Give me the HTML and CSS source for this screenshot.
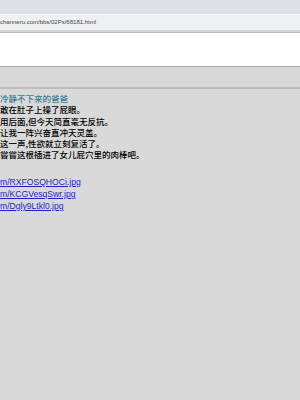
FILE: index.html
```html
<!DOCTYPE html>
<html lang="zh">

<head>
    <meta charset="UTF-8">
    <meta name="viewport" content="width=device-width, initial-scale=1.0">
    <title>68181</title>
    <link rel="stylesheet" href="styles.css">
</head>

<body>
    <!-- 浏览器地址栏 -->
    <div class="chrome"></div>
    <div class="addr">channeru.com/bbs/02Ps/68181.html</div>
    <div class="addr-edge"></div>
    <div class="blank"></div>
    <div class="bar"></div>

    <!-- 正文 -->
    <div class="post">
        <p class="title">冷静不下来的爸爸</p>
        <p class="body">
            敢在肚子上操了屁眼。<br>
            用后面,但今天简直毫无反抗。<br>
            让我一阵兴奋直冲天灵盖。<br>
            这一声,性欲就立刻复活了。<br>
            嘗嘗这根插进了女儿屁穴里的肉棒吧。
        </p>
        <ul class="links">
            <li><a href="#">m/RXFOSQHOCi.jpg</a></li>
            <li><a href="#">m/KCGVesqSwr.jpg</a></li>
            <li><a href="#">m/Dgly9Ltkl0.jpg</a></li>
        </ul>
    </div>
</body>

</html>
```

FILE: styles.css
```css
html,
body,
p,
ul,
li {
    margin: 0;
    padding: 0;
}

body {
    width: 300px;
    height: 400px;
    overflow: hidden;
    background: #d9d9d9;
    font-family: "Noto Sans CJK SC", "Noto Sans", sans-serif;
}

.chrome {
    height: 14px;
    background: #dde0e6;
}

.addr {
    height: 15px;
    line-height: 15px;
    background: #eef0f3;
    border-top: 1px solid #f8f9fa;
    font-family: "Liberation Sans", sans-serif;
    font-size: 6px;
    color: #444;
}

.addr-edge {
    height: 2px;
    background: #d3d4d5;
    border-bottom: 1px solid #b9b9b9;
}

.blank {
    height: 33px;
    background: #fff;
}

.bar {
    height: 20px;
    background: #d8d8d8;
    border-top: 1px solid #a8a8a8;
    border-bottom: 2px solid #bdbdbd;
}

/* 帖子内容 */
.post {
    padding-top: 4px;
    font-size: 8.5px;
    font-weight: 500;
    line-height: 11.3px;
    color: #000;
}

.title {
    color: #3a7c97;
}

.links {
    list-style: none;
    margin-top: 15px;
    font-family: "Liberation Sans", sans-serif;
    font-size: 8.6px;
    font-weight: 400;
    line-height: 12px;
}

.links a {
    color: #1f1fcc;
    text-decoration: underline;
}
```
